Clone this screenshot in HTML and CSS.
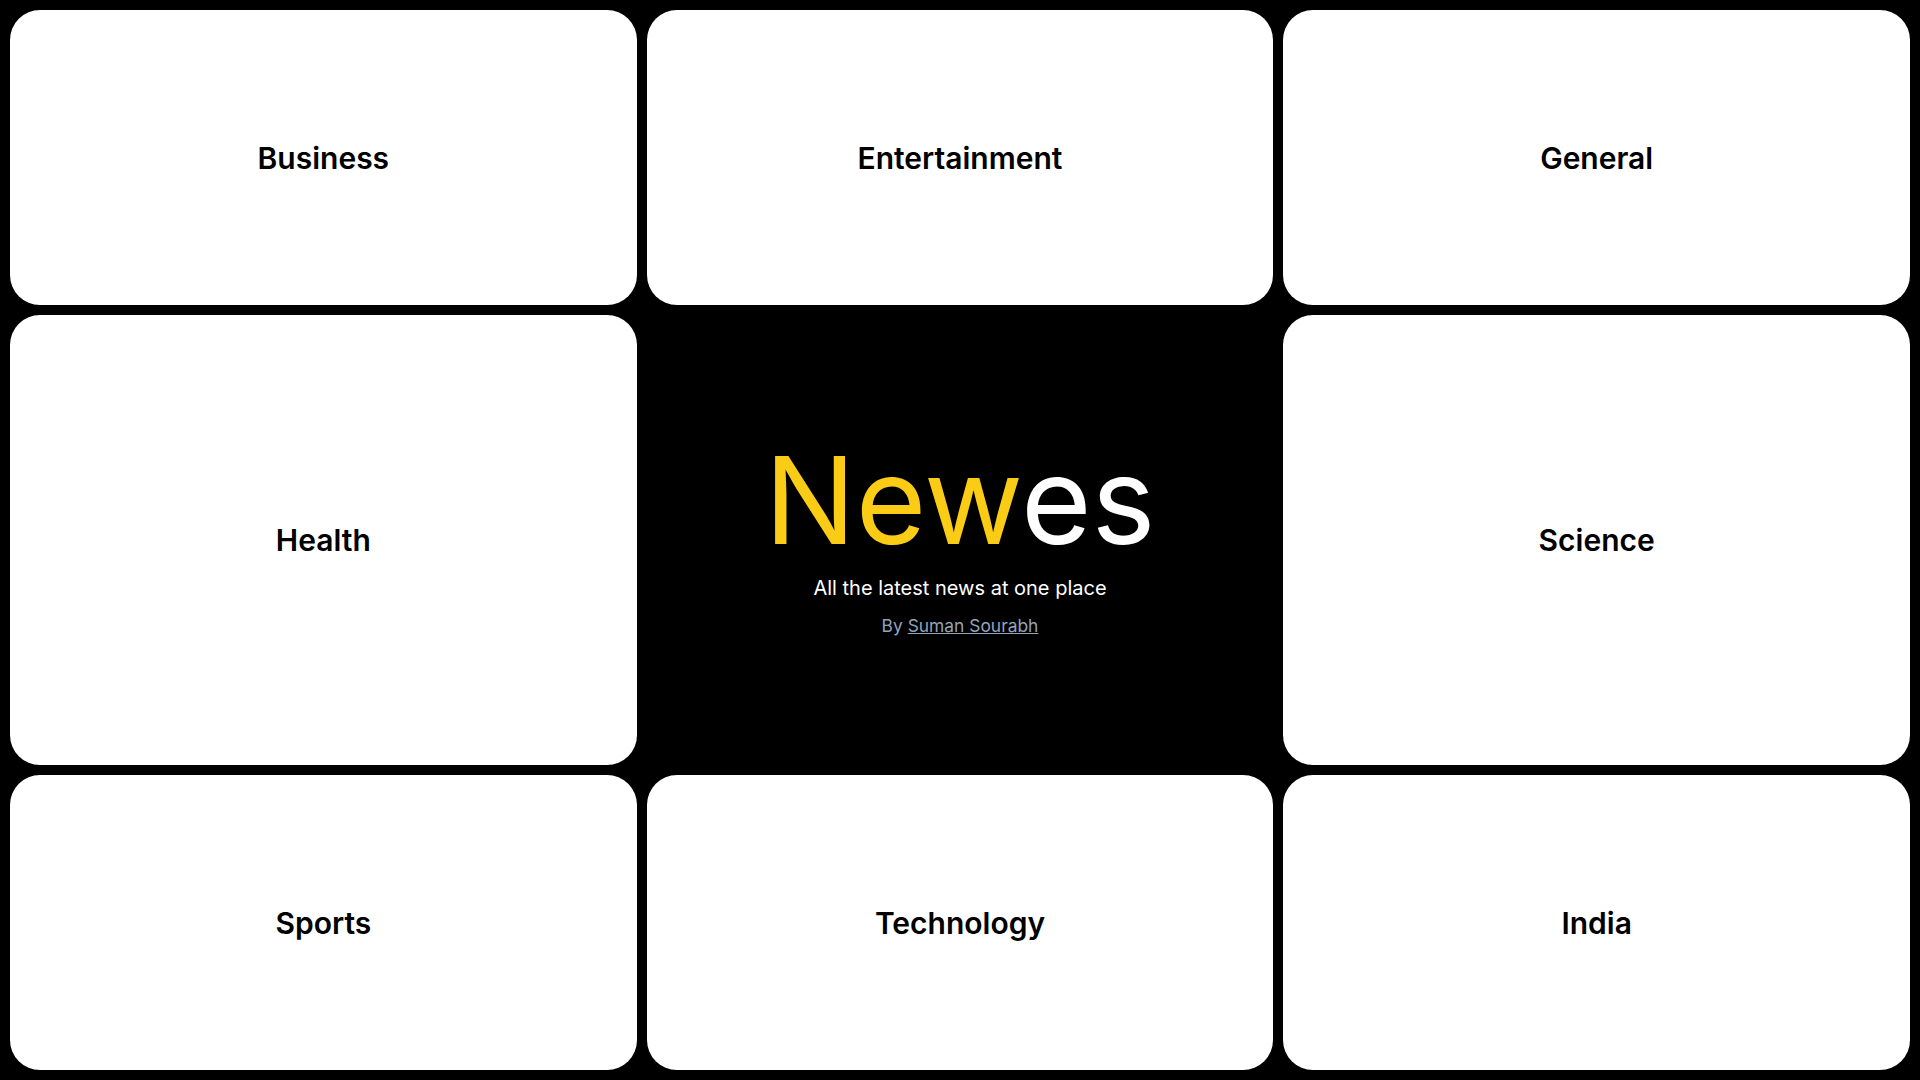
FILE: index.html
```html
<!DOCTYPE html>
<html lang="en">
<head>
<meta charset="utf-8">
<title>Newes</title>
<link rel="stylesheet" href="styles.css">
</head>
<body>
<main class="grid">
  <a class="card" href="#">Business</a>
  <a class="card" href="#">Entertainment</a>
  <a class="card" href="#">General</a>
  <a class="card" href="#">Health</a>
  <section class="hero">
    <h1 class="title"><span class="accent">New</span>es</h1>
    <p class="tagline">All the latest news at one place</p>
    <p class="byline">By <a href="#">Suman Sourabh</a></p>
  </section>
  <a class="card" href="#">Science</a>
  <a class="card" href="#">Sports</a>
  <a class="card" href="#">Technology</a>
  <a class="card" href="#">India</a>
</main>
</body>
</html>
```
FILE: styles.css
```css
* { box-sizing: border-box; }
html, body {
  margin: 0;
  padding: 0;
  background: #000;
  font-family: Inter, "Noto Sans", sans-serif;
}
.grid {
  display: grid;
  grid-template-columns: 1fr 1fr 1fr;
  grid-template-rows: 295px 1fr 295px;
  gap: 10px;
  padding: 10px;
  height: 100vh;
}
.card {
  background: #fff;
  border-radius: 30px;
  display: flex;
  align-items: center;
  justify-content: center;
  color: #000;
  text-decoration: none;
  font-size: 30px;
  font-weight: 600;
}
.hero {
  display: flex;
  flex-direction: column;
  align-items: center;
  justify-content: center;
  padding-bottom: 12px;
  color: #fff;
}
.title {
  margin: 0;
  font-size: 121px;
  font-weight: 400;
  line-height: 1.2;
  color: #fff;
}
.accent { color: #facc15; }
.tagline {
  margin: 0;
  font-size: 20px;
  line-height: 28px;
}
.byline {
  margin: 10px 0 0;
  font-size: 17.4px;
  line-height: 28px;
  color: #94a3b8;
}
.byline a { color: #94a3b8; }
```
